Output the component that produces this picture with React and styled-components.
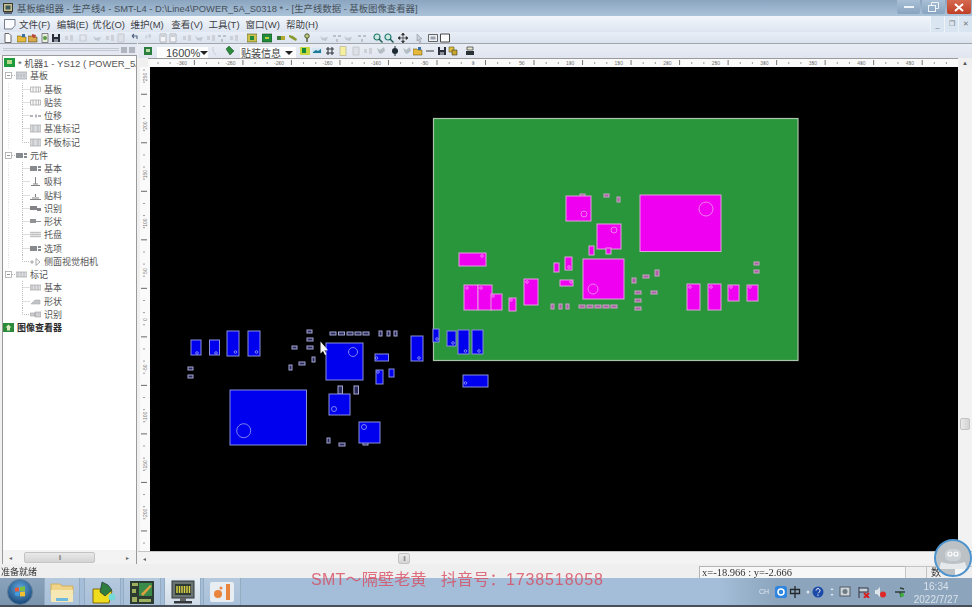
import React from "react";
import styled, { createGlobalStyle } from "styled-components";

const Global = createGlobalStyle`
  html, body { margin: 0; padding: 0; background: #f0f0f0; overflow: hidden; }
  * { box-sizing: border-box; }
`;

const LATIN_FONT = `"Liberation Sans", "Noto Sans CJK SC", sans-serif`;

const Screen = styled.div`
  position: relative;
  width: 972px;
  height: 607px;
  display: flex;
  flex-direction: column;
  overflow: hidden;
  font-family: ${LATIN_FONT};
  color: #333;
  filter: blur(0.4px);
`;

/* ---------- title + menu ---------- */
const TitleBar = styled.div`
  height: 16px;
  flex: none;
  display: flex;
  align-items: center;
  padding-left: 3px;
  background: linear-gradient(#8ba5c0, #abc3d9);
`;
const AppIcon = styled.svg`
  width: 10px;
  height: 11px;
  flex: none;
`;
const TitleText = styled.span`
  margin-left: 4px;
  font-size: 9.4px;
  color: #46505a;
  white-space: nowrap;
`;
const WinButtons = styled.div`
  margin-left: auto;
  display: flex;
  gap: 2px;
  padding-right: 1px;
  align-self: flex-start;
`;
const WinButton = styled.div`
  width: ${(p) => (p.$close ? 24 : 23)}px;
  height: 14px;
  display: flex;
  align-items: center;
  justify-content: center;
  border-radius: 0 0 2px 2px;
  background: ${(p) => (p.$close ? "linear-gradient(#d46a50, #bf3f25)" : "linear-gradient(#a9c0d6, #88a4bf)")};
`;
const MenuBar = styled.div`
  height: 16px;
  flex: none;
  display: flex;
  align-items: center;
  padding-left: 4px;
  background: linear-gradient(#f2f6fb, #dde5f0);
`;
const MenuItem = styled.span`
  font-size: 9.5px;
  color: #3c4046;
  margin-left: ${(p) => p.$gap}px;
  white-space: nowrap;
`;
const MdiButtons = styled.div`
  margin-left: auto;
  display: flex;
  height: 100%;
`;
const MdiButton = styled.div`
  width: 14px;
  display: flex;
  align-items: center;
  justify-content: center;
  font-size: 7px;
  color: #777;
  background: #d9e5f0;
  border-left: 1px solid #eef3f8;
`;

/* ---------- toolbars ---------- */
const TopTools = styled.div`
  height: 11px;
  flex: none;
  display: flex;
  align-items: center;
  background: linear-gradient(#e9eef6, #dbe3ee);
`;
const ToolSvg = styled.svg`
  width: 10px;
  height: 10px;
  flex: none;
  margin-left: ${(p) => p.$gap}px;
`;
const Main = styled.div`
  flex: 1;
  min-height: 0;
  display: flex;
`;
const LeftPane = styled.div`
  width: 138px;
  flex: none;
  display: flex;
  flex-direction: column;
  background: #f0f0f0;
  padding-right: 1px;
`;
const PaneHeader = styled.div`
  height: 12px;
  flex: none;
  display: flex;
  align-items: center;
  gap: 2px;
  padding: 0 2px 0 3px;
  background: #e3e8f2;
  border-top: 1px solid #a2a5aa;
`;
const Grip = styled.div`
  flex: 1;
  height: 3px;
  border-top: 1px solid #c3c8d0;
  border-bottom: 1px solid #c3c8d0;
`;
const PaneBtn = styled.div`
  width: 6px;
  height: 6px;
  background: #9a9ea5;
  opacity: 0.7;
`;
const TreeBox = styled.div`
  flex: 1;
  min-height: 0;
  margin-left: 2px;
  display: flex;
  flex-direction: column;
  background: #fff;
  border: 1px solid #9a9a9a;
  border-bottom: none;
`;
const TreeList = styled.div`
  flex: 1;
  min-height: 0;
  overflow: hidden;
`;
const TreeRow = styled.div`
  height: 13.25px;
  display: flex;
  align-items: center;
  padding-left: ${(p) => p.$pad || 0}px;
  font-size: ${(p) => p.$size || 9}px;
  font-weight: ${(p) => (p.$bold ? 700 : 400)};
  color: ${(p) => (p.$bold ? "#2a2a2a" : "#555")};
  white-space: nowrap;
  overflow: hidden;
`;
const RowLead = styled.svg`
  flex: none;
  height: 13.25px;
  width: ${(p) => p.$w}px;
`;
const RowIcon = styled.svg`
  flex: none;
  width: 11px;
  height: 9px;
  margin-right: 3px;
  opacity: ${(p) => (p.$soft ? 0.8 : 1)};
`;
const HScrollTrack = styled.div`
  height: 14px;
  flex: none;
  display: flex;
  align-items: center;
  background: #f3f3f3;
  color: #666;
  font-size: 6px;
`;
const ScrollArrow = styled.span`
  width: ${(p) => p.$w || 12}px;
  flex: none;
  text-align: center;
`;
const ScrollThumb = styled.div`
  display: flex;
  align-items: center;
  justify-content: center;
  flex: none;
  width: ${(p) => p.$w}px;
  height: 11px;
  margin-left: ${(p) => p.$offset || 0}px;
  background: linear-gradient(#e9e9e9, #d4d4d4);
  border: 1px solid #c3c3c3;
  border-radius: 2px;
  color: #777;
  font-size: 6px;
  letter-spacing: -1px;
`;

const RightPane = styled.div`
  flex: 1;
  min-width: 0;
  display: flex;
  flex-direction: column;
  background: #f0f0f0;
`;
const DocTools = styled.div`
  height: 15px;
  flex: none;
  display: flex;
  align-items: center;
  background: linear-gradient(#e9edf5, #e0e5f0);
  border-top: 1px solid #a2a5aa;
`;
const Combo = styled.div`
  width: ${(p) => p.$w}px;
  margin-left: ${(p) => p.$gap}px;
  height: 12px;
  margin-top: 3px;
  flex: none;
  display: flex;
  align-items: center;
  justify-content: space-between;
  padding: 0 3px 0 ${(p) => p.$pad}px;
  background: #fdfdfd;
  font-size: ${(p) => p.$size}px;
  color: #444;
  white-space: nowrap;
  overflow: hidden;
`;
const ComboCaret = styled.span`
  width: 0;
  height: 0;
  flex: none;
  border-left: 4px solid transparent;
  border-right: 4px solid transparent;
  border-top: 4px solid #222;
`;
const RulerRow = styled.div`
  height: 9px;
  flex: none;
  display: flex;
  align-items: center;
  padding-left: 10px;
  background: #f0f0f0;
`;
const RulerSvg = styled.svg`
  display: block;
  flex: none;
`;
const UpArrow = styled.span`
  flex: 1;
  text-align: center;
  font-size: 6px;
  color: #555;
`;
const ViewRow = styled.div`
  height: 484px;
  flex: none;
  display: flex;
`;
const VRulerBox = styled.div`
  width: 12px;
  flex: none;
  padding-left: 2px;
  background: #f0f0f0;
`;
const Canvas = styled.div`
  width: 808px;
  flex: none;
  background: #000;
  overflow: hidden;
`;
const BoardSvg = styled.svg`
  display: block;
`;
const VScroll = styled.div`
  flex: 1;
  display: flex;
  flex-direction: column;
  align-items: center;
  padding-top: 351px;
  background: #f2f2f2;
`;
const VThumb = styled.div`
  width: 10px;
  height: 12px;
  background: linear-gradient(90deg, #e9e9e9, #d4d4d4);
  border: 1px solid #c3c3c3;
  border-radius: 2px;
`;
const BottomScroll = styled.div`
  flex: 1;
  display: flex;
  align-items: center;
  background: #f3f3f3;
  color: #666;
  font-size: 6px;
  border-top: 1px solid #c4c4c4;
`;

/* ---------- status + taskbar ---------- */
const StatusBar = styled.div`
  height: 14px;
  flex: none;
  display: flex;
  align-items: center;
  padding-left: 1px;
  background: #efefef;
  font-size: 9px;
  color: #333;
`;
const StatusText = styled.span`
  width: 698px;
  flex: none;
`;
const CoordBox = styled.div`
  width: 206px;
  height: 12px;
  margin-top: 2px;
  flex: none;
  padding-left: 2px;
  font-family: "Liberation Serif", serif;
  font-size: 10.5px;
  line-height: 12px;
  color: #333;
  background: #f7f7f7;
  border-top: 1px solid #b4b4b4;
  border-left: 1px solid #b4b4b4;
  white-space: nowrap;
`;
const StatusCell = styled.div`
  width: ${(p) => p.$w}px;
  height: 12px;
  margin-top: 2px;
  flex: none;
  padding-left: ${(p) => p.$pad || 0}px;
  border-top: 1px solid #c4c4c4;
  border-left: 1px solid #c4c4c4;
  font-size: 10px;
  line-height: 11px;
`;
const Taskbar = styled.div`
  height: 29px;
  flex: none;
  display: flex;
  align-items: stretch;
  background: linear-gradient(90deg, #a4bdd8 0, #a4bdd8 74%, #8ca5bd 80%, #8ca5bd 100%);
  border-bottom: 2px solid #47505a;
`;
const StartArea = styled.div`
  width: 44px;
  flex: none;
  display: flex;
  align-items: center;
  justify-content: center;
  background: linear-gradient(#8aa3bb, #7a94ad);
`;
const StartOrb = styled.svg`
  width: 26px;
  height: 26px;
  margin-right: 4px;
`;
const TaskButton = styled.div`
  width: ${(p) => p.$w}px;
  margin-right: ${(p) => p.$gap}px;
  flex: none;
  display: flex;
  align-items: center;
  justify-content: center;
  background: ${(p) => (p.$active ? "linear-gradient(#e6eef5, #cfdbe7)" : "linear-gradient(#b5c9de, #a8c0d9)")};
  border-left: 1px solid #94abc2;
  border-right: 1px solid #94abc2;
`;
const TaskIcon = styled.svg`
  width: 26px;
  height: 26px;
`;
const Tray = styled.div`
  margin-left: auto;
  display: flex;
  align-items: center;
  padding-right: 9px;
`;
const TrayLabel = styled.span`
  font-size: 7px;
  color: #dfe7ef;
  margin-right: 6px;
`;
const TrayIcon = styled.svg`
  width: ${(p) => p.$w || 12}px;
  height: 12px;
  margin-right: ${(p) => p.$gap}px;
  flex: none;
`;
const Clock = styled.div`
  width: 54px;
  padding-top: 3px;
  text-align: center;
  font-size: 10px;
  line-height: 13px;
  color: #d9e2ea;
  white-space: nowrap;
`;

/* ---------- overlays ---------- */
const Watermark = styled.div`
  position: absolute;
  left: 311px;
  top: 570px;
  font-family: ${LATIN_FONT};
  font-size: 16px;
  line-height: 20px;
  letter-spacing: 0.25px;
  color: rgba(216, 72, 92, 0.78);
  white-space: pre;
`;
const WatermarkDigits = styled.span`
  letter-spacing: 0.9px;
`;
const Avatar = styled.div`
  position: absolute;
  left: 934px;
  top: 539px;
  width: 38px;
  height: 38px;
  border-radius: 50%;
  border: 2px solid #4d94cf;
  background: #bcc1c5;
  overflow: hidden;
`;
const AvatarFace = styled.svg`
  display: block;
  width: 34px;
  height: 34px;
`;

/* ---------- drawings ---------- */
const toolParts = {
  page: <path d="M2 .5h4l2 2v7H2z" fill="#fff" stroke="#444" strokeWidth=".8" />,
  folder: (
    <>
      <path d="M0 3h4l1 1h4v5H0z" fill="#e6b93a" stroke="#6a5a20" strokeWidth=".6" />
      <path d="M5 1h3v3H5z" fill="#3a6ea8" />
    </>
  ),
  folder2: (
    <>
      <path d="M0 3h4l1 1h4v5H0z" fill="#d8a84a" stroke="#5a4a20" strokeWidth=".6" />
      <path d="M4 1l4 1-1 3-3-1z" fill="#b84a3a" />
    </>
  ),
  doc: (
    <>
      <path d="M2 .5h6v9H2z" fill="#e8f0d8" stroke="#556" strokeWidth=".7" />
      <circle cx="5" cy="5" r="2" fill="#5a9a4a" />
    </>
  ),
  floppy: (
    <>
      <path d="M1 1h8v8H1z" fill="#2a2e3a" />
      <path d="M3 1h4v3H3z" fill="#dfe3ea" />
      <path d="M3 6h4v3H3z" fill="#8a8e98" />
    </>
  ),
  dim: <path d="M2 2h6v6H2z" fill="none" stroke="#c8ccd3" strokeWidth="1.2" />,
  dimdots: <path d="M1 3h3v4H1zM6 2h3v6H6z" fill="#cdd0d7" />,
  undo: <path d="M2 3h5v3M2 3l2-2M2 3l2 2" fill="none" stroke="#51627e" strokeWidth="1.1" />,
  redo: <path d="M8 3H3v3M8 3L6 1M8 3L6 5" fill="none" stroke="#c8ccd3" strokeWidth="1.1" />,
  box: (
    <>
      <path d="M2 1h6v8H2z" fill="#f3f5f8" stroke="#a4a8b0" strokeWidth=".8" />
      <path d="M3 3h4" stroke="#a4a8b0" />
    </>
  ),
  greenA: (
    <>
      <path d="M0 1h10v8H0z" fill="#cfc050" stroke="#4a5a20" strokeWidth=".6" />
      <path d="M3 3h4v4H3z" fill="#1f8a3a" />
    </>
  ),
  greenB: (
    <>
      <path d="M0 1h10v8H0z" fill="#1f8a3a" stroke="#1a4a20" strokeWidth=".6" />
      <path d="M3 4h4v2H3z" fill="#b8d040" />
    </>
  ),
  chipA: (
    <>
      <path d="M1 3h8v4H1z" fill="#b0a830" />
      <path d="M1 3h4v4H1z" fill="#3a7a3a" />
    </>
  ),
  chipB: <path d="M1 2l4 1 4 3-1 2-4-2-3-2z" fill="#8a9a30" />,
  key: (
    <>
      <circle cx="5" cy="3" r="2.2" fill="#c4cc80" stroke="#4a5a30" />
      <path d="M5 5v4" stroke="#4a5a30" strokeWidth="1.4" />
    </>
  ),
  dimlink: <path d="M1 3l3 2 5-1-2 4-4-1z" fill="#c2c7ce" />,
  dimpair: <path d="M1 2h3v2H1zM6 2h3v2H6zM4 6h2v3H4z" fill="#bcc1c8" />,
  zoomIn: (
    <>
      <circle cx="4" cy="4" r="3" fill="#cfe8e0" stroke="#1f7a70" strokeWidth="1.2" />
      <path d="M6 6l3.5 3.5" stroke="#1f5a50" strokeWidth="1.4" />
    </>
  ),
  move: <path d="M5 0v10M0 5h10M5 0L3.5 2h3zM5 10L3.5 8h3zM0 5l2-1.5v3zM10 5L8 3.5v3z" fill="#333" stroke="#333" strokeWidth=".7" />,
  cursor: <path d="M3 1l5 5H5.5L7 9 5.5 9.5 4 6.5 3 8z" fill="#c8d0e0" stroke="#888" strokeWidth=".5" />,
  frame: (
    <>
      <path d="M.5 1.5h9v7h-9z" fill="#eef0f4" stroke="#444" strokeWidth=".8" />
      <path d="M2.5 3.5h5v3h-5z" fill="#98a0ae" />
    </>
  ),
  rect: <path d="M.5 1h9v8h-9z" fill="#fbfbfb" stroke="#333" strokeWidth=".9" />,
  solidGreen: (
    <>
      <path d="M1 1h8v8H1z" fill="#2b7d3f" />
      <path d="M3 3h4v3H3z" fill="#bde0a8" />
    </>
  ),
  tag: <path d="M1 3l3-3 5 5-4 4z" fill="#2c8a3c" stroke="#1c4a22" strokeWidth=".5" />,
  greenC: (
    <>
      <path d="M0 1h10v8H0z" fill="#c8d840" />
      <path d="M2 2h4v5H2z" fill="#158a3a" />
    </>
  ),
  wave: (
    <>
      <path d="M0 2h10v6H0z" fill="#d4e6f0" />
      <path d="M1 6l3-2 2 1 3-2v4H1z" fill="#1f7a9a" />
    </>
  ),
  hash: <path d="M3 1v8M7 1v8M1 3h8M1 7h8" stroke="#34383e" strokeWidth="1.1" />,
  note: <path d="M2 .5h6v9H2z" fill="#f6ef9e" stroke="#bcb8a0" strokeWidth=".8" />,
  dimpage: <path d="M2 1h6v8H2z" fill="#dde0e6" stroke="#c4c8d0" />,
  pin: (
    <>
      <circle cx="5" cy="5" r="3" fill="#1d2a30" />
      <path d="M5 0v2M5 8v2" stroke="#1d2a30" />
    </>
  ),
  dimsplit: <path d="M1 2l3 2 4-3 1 4-4 3-2-1z" fill="#b4bdc2" />,
  dash: <path d="M1 5h8" stroke="#55595f" strokeWidth="1.2" />,
  yellowDoc: (
    <>
      <path d="M1 1h5v5H1z" fill="#e0c040" stroke="#5a5020" strokeWidth=".6" />
      <path d="M4 4h5v5H4z" fill="#c8a430" stroke="#3a3a20" strokeWidth=".6" />
    </>
  ),
  stamp: (
    <>
      <path d="M2 1h6v3H2z" fill="#e8e8d0" stroke="#333" strokeWidth=".7" />
      <path d="M1 5h8v4H1z" fill="#2a3236" />
    </>
  ),
  small: <path d="M3 1v4l3 4" fill="none" stroke="#c8ccd3" />,
};

const topTools = [
  [8, "page"], [22, "folder"], [33, "folder2"], [45, "doc"], [56, "floppy"], [69, "dimdots"], [83, "dim"],
  [97, "dimlink"], [110, "dimdots"], [121, "dimpage"], [135, "undo"], [148, "redo"], [163, "box"], [173, "box"],
  [187, "dimdots"], [199, "dimlink"], [211, "dimdots"], [222, "dimpair"], [234, "dimdots"], [252, "greenA"],
  [267, "greenB"], [281, "chipA"], [293, "chipB"], [307, "key"], [324, "dimlink"], [337, "dimpair"], [348, "dimlink"],
  [362, "dimpair"], [378, "zoomIn"], [389, "zoomIn"], [403, "move"], [419, "cursor"], [433, "frame"], [445, "rect"],
];

const runFrom = (origin, items) => {
  let end = origin;
  return items.map(([x, kind]) => {
    const gap = x - 5 - end;
    end = x + 5;
    return (
      <ToolSvg key={`${x}${kind}`} viewBox="0 0 10 10" $gap={gap}>
        {toolParts[kind]}
      </ToolSvg>
    );
  });
};

const treeIconParts = {
  board: <path d="M0 1h11v7H0z M2 3v3M5 3v3M8 3v3" fill="#c4c8ce" stroke="#95999f" strokeWidth=".8" />,
  frame: <path d="M.5 2h10v5H.5zM3 2v5M6 2v5M8.5 2v5" fill="#f4f4f4" stroke="#999" strokeWidth=".8" />,
  dots: <path d="M0 4h3v2H0zM5 3.5h2v3H5zM8 4h3v2H8z" fill="#a0a3a9" />,
  chip: <path d="M0 1h11v7H0z M3 1v7M8 1v7" fill="#cfd1d4" stroke="#9a9ca0" strokeWidth=".8" />,
  dark: <path d="M0 2h7v5H0zM8 2h3v2H8zM8 5h3v2H8z" fill="#6a6d72" />,
  pick: <path d="M5.5 0v7M3 7h5M1 8.5h9" fill="none" stroke="#666" />,
  place: <path d="M5.5 3v3M2 7h7M0 8.5h11" stroke="#666" strokeWidth="1.1" fill="none" />,
  vision: <path d="M0 2h7v4H0zM7 4h4v3H7z" fill="#63666b" />,
  shape: <path d="M0 2h6v4H0zM6 4h5v1H6z" fill="#76797e" />,
  tray: <path d="M0 2h11v1H0zM0 4h11v1H0zM0 6h11v1H0zM3 2v5M7 2v5" fill="#b4b4b4" stroke="#b4b4b4" strokeWidth=".5" />,
  cam: <path d="M0 5h4M2 3v4M6 1.5l4 3.5-4 3.5z" fill="none" stroke="#888" strokeWidth=".9" />,
  mark: <path d="M0 2h11v5H0zM2 2v5M5 2v5M8 2v5" fill="#d6d8dc" stroke="#999" strokeWidth=".8" />,
  slant: <path d="M1 7l4-4h5v4z" fill="#b4b6ba" stroke="#999" strokeWidth=".6" />,
  frameS: <path d="M0 3h5v3H0zM5 2h6v5H5z" fill="#c0c2c6" stroke="#888" strokeWidth=".6" />,
};

const treeRows = [
  { label: "基板", icon: "board", level: 0 },
  { label: "基板", icon: "frame", level: 1 },
  { label: "贴装", icon: "frame", level: 1 },
  { label: "位移", icon: "dots", level: 1 },
  { label: "基准标记", icon: "chip", level: 1 },
  { label: "坏板标记", icon: "chip", level: 1, last: true },
  { label: "元件", icon: "dark", level: 0 },
  { label: "基本", icon: "dark", level: 1 },
  { label: "吸料", icon: "pick", level: 1 },
  { label: "贴料", icon: "place", level: 1 },
  { label: "识别", icon: "vision", level: 1 },
  { label: "形状", icon: "shape", level: 1 },
  { label: "托盘", icon: "tray", level: 1 },
  { label: "选项", icon: "dark", level: 1 },
  { label: "侧面视觉相机", icon: "cam", level: 1, last: true },
  { label: "标记", icon: "mark", level: 0 },
  { label: "基本", icon: "mark", level: 1 },
  { label: "形状", icon: "slant", level: 1 },
  { label: "识别", icon: "frameS", level: 1, last: true },
];

const dotted = { stroke: "#bcbcbc", strokeWidth: 1, strokeDasharray: "1 1", fill: "none" };

function TreeLead({ level, last, noTrunk }) {
  if (level === 0) {
    return (
      <RowLead viewBox="0 0 13 13.25" $w={13}>
        <path d="M9 6.5h4" {...dotted} />
        <rect x="2.5" y="3.5" width="6" height="6" fill="#fff" stroke="#a8a8a8" strokeWidth=".8" />
        <path d="M4 6.5h3" stroke="#777" strokeWidth=".8" />
      </RowLead>
    );
  }
  return (
    <RowLead viewBox="0 0 27 13.25" $w={27}>
      {!noTrunk && <path d="M5.5 0v13.25" {...dotted} opacity=".4" />}
      <path d={last ? "M19.5 0v6.5h7" : "M19.5 0v13.25M19.5 6.5h7"} {...dotted} />
    </RowLead>
  );
}

const parts = {
  blue: [
    [191, 340, 10, 15, 197, 353], [209.5, 340, 10, 15, 216, 353], [227, 331, 12, 25, 235.5, 352], [248, 331, 12, 25, 256.5, 352],
    [230, 390, 76.5, 55, 243.7, 430.7, 7], [326, 343, 37, 37, 353, 352, 4.5], [329, 394, 21, 21, 334, 409, 2.5],
    [359, 422, 21, 21, 364, 427, 2.5], [375, 354, 13.5, 7, 376.5, 358], [376, 370, 7, 14, 378, 372], [389, 369, 5, 8],
    [411, 336, 12, 25, 419, 358], [433, 329, 6, 13, 437, 339], [447, 331, 9, 15, 453, 343], [458, 330, 11, 24, 465.5, 351],
    [472, 330, 11, 24, 479, 351], [463, 375, 25, 12, 465.5, 383],
  ],
  bluePads: [
    [307, 330, 5, 3], [307, 338, 6, 3], [307, 346, 6, 3], [292, 346, 5, 3], [299, 362, 6, 3], [312, 357, 3, 5], [289, 365, 3, 5],
    [188, 367, 5, 3], [188, 375, 5, 3], [330, 332, 6, 3], [338.5, 332, 6, 3], [347, 332, 6, 3], [355, 332, 6, 3], [363, 332, 6, 3],
    [379, 331, 3, 5], [387, 331, 3, 5], [394, 331, 3, 5], [338, 386, 4.5, 8], [354, 386, 4.5, 8], [327, 438, 3, 5], [339, 443, 6, 3], [363, 442, 5, 3],
  ],
  magenta: [
    [566, 196, 25, 25, 584, 214, 3], [640, 195, 81, 56.5, 706, 209, 7], [597, 224, 24, 25, 614, 230, 3], [589, 246, 5, 9], [606, 248, 5, 6],
    [583, 259, 41, 40, 593, 289, 5], [565, 257, 7, 13, 569, 267], [554, 263, 5, 9], [560, 280, 13, 6, 571, 282], [459, 253, 27, 13, 482, 256],
    [464, 285, 14, 25, 467, 288], [478, 285, 14, 25, 481, 288], [491, 294, 11, 16, 493, 296], [509, 298, 7, 13, 511, 300], [524, 279, 14, 26, 527, 282],
    [687, 284, 13, 26, 690, 287], [708, 284, 13, 26, 711, 287], [728, 285, 11, 16, 731, 287], [747, 285, 11, 16, 750, 287],
  ],
  magentaPads: [
    [580, 194, 5, 3], [604, 194, 5, 3], [617, 197, 3, 5], [551, 304, 3, 5], [559, 304, 3, 5], [566, 304, 3, 5], [579, 305, 6, 3], [587, 305, 6, 3],
    [595, 305, 6, 3], [603, 305, 6, 3], [611, 305, 6, 3], [632, 278, 4, 5], [643, 275, 6, 3], [655, 270, 4, 6], [635, 291, 6, 3], [635, 299, 6, 3],
    [635, 307, 6, 3], [651, 291, 6, 3], [754, 262, 5, 3], [754, 270, 5, 3],
  ],
};

function Part({ p, fill, stroke, mark }) {
  const [x, y, w, h, cx, cy, r] = p;
  return (
    <>
      <rect x={x} y={y} width={w} height={h} fill={fill} stroke={stroke} strokeWidth="1" />
      {cx !== undefined && <circle cx={cx} cy={cy} r={r || 1.3} fill="none" stroke={mark} strokeWidth=".8" />}
    </>
  );
}

function HRuler() {
  const labels = [];
  for (let i = 0; i < 16; i++) labels.push(i);
  const ticks = [];
  for (let x = 10; x < 810; x += 12.13) ticks.push(x);
  return (
    <RulerSvg width="810" height="9" viewBox="148 0 810 9">
      <rect x="148" y="0" width="810" height="9" fill="#fafafa" />
      <path d="M148 .5h810" stroke="#9a9a9a" />
      {ticks.map((t, i) => (
        <path key={i} d={`M${148 + t} ${i % 4 === 3 ? 2 : 4}v${i % 4 === 3 ? 5 : 2}`} stroke={i % 4 === 3 ? "#555" : "#888"} strokeWidth=".8" />
      ))}
      {labels.map((i) => (
        <text key={i} x={182 + 48.53 * i} y="7" textAnchor="middle" fontSize="5" fill="#777" fontFamily="Liberation Sans, sans-serif">
          {(i - 6) * 50}
        </text>
      ))}
    </RulerSvg>
  );
}

function VRuler() {
  const ticks = [];
  for (let y = 0; y < 484; y += 12.13) ticks.push(y);
  const labels = [];
  for (let i = 0; i < 10; i++) labels.push(i);
  return (
    <RulerSvg width="10" height="484" viewBox="0 0 10 484">
      <rect width="10" height="484" fill="#fafafa" />
      {ticks.map((t, i) => (
        <path key={i} d={`M${i % 4 === 2 ? 1 : 3} ${t + 3}h${i % 4 === 2 ? 6 : 2}`} stroke={i % 4 === 2 ? "#444" : "#888"} strokeWidth=".8" />
      ))}
      {labels.map((i) => (
        <text
          key={i}
          transform={`translate(7 ${10 + 48.53 * i}) rotate(-90)`}
          textAnchor="middle"
          fontSize="5"
          fill="#777"
          fontFamily="Liberation Sans, sans-serif"
        >
          {(i - 5) * -50}
        </text>
      ))}
    </RulerSvg>
  );
}

function BoardView() {
  return (
    <BoardSvg width="808" height="484" viewBox="150 67 808 484">
      <rect x="433.5" y="118.5" width="364.5" height="242" fill="#2a963c" stroke="#aac4ac" strokeWidth="1.2" />
      {parts.bluePads.map((p, i) => (
        <Part key={i} p={p} fill="#2a2a5a" stroke="#a6a8d4" />
      ))}
      {parts.blue.map((p, i) => (
        <Part key={i} p={p} fill="#0000ee" stroke="#8a8fdc" mark="#9da2ef" />
      ))}
      {parts.magentaPads.map((p, i) => (
        <Part key={i} p={p} fill="#b060a8" stroke="#c8a4c4" />
      ))}
      {parts.magenta.map((p, i) => (
        <Part key={i} p={p} fill="#f000f0" stroke="#dfa0dc" mark="#f09cf0" />
      ))}
      <path d="M320.5 341.5v12l2.5-2.5 2 4 1.5-.8-2-4h3.5z" fill="#f4f4f4" />
    </BoardSvg>
  );
}

const menus = [
  ["文件(F)", 3], ["编辑(E)", 6.5], ["优化(O)", 4], ["维护(M)", 5.5], ["查看(V)", 7.5], ["工具(T)", 5.5], ["窗口(W)", 6], ["帮助(H)", 6],
];

export default function App() {
  return (
    <Screen>
      <Global />
      <TitleBar>
        <AppIcon viewBox="0 0 10 11">
          <rect x=".5" y=".5" width="9" height="8" fill="#c8c090" stroke="#3a3a30" />
          <rect x="2.5" y="2.5" width="5" height="4" fill="#3d5a5a" />
          <rect x="1" y="9" width="8" height="2" fill="#55606a" />
        </AppIcon>
        <TitleText>基板编组器 - 生产线4 - SMT-L4 - D:\Line4\POWER_5A_S0318 * - [生产线数据 - 基板图像查看器]</TitleText>
        <WinButtons>
          <WinButton>
            <svg width="10" height="4" viewBox="0 0 10 4">
              <rect y="1" width="10" height="2" fill="#eef3f8" />
            </svg>
          </WinButton>
          <WinButton>
            <svg width="11" height="10" viewBox="0 0 11 10">
              <path d="M3.5 3V.5h7v6H8" fill="none" stroke="#eef3f8" />
              <rect x=".5" y="3.5" width="7" height="6" fill="none" stroke="#eef3f8" />
            </svg>
          </WinButton>
          <WinButton $close>
            <svg width="10" height="9" viewBox="0 0 10 9">
              <path d="M1 1l8 7M9 1L1 8" stroke="#fff" strokeWidth="2" />
            </svg>
          </WinButton>
        </WinButtons>
      </TitleBar>
      <MenuBar>
        <svg width="12" height="12" viewBox="0 0 12 12">
          <path d="M.5 1.5h10.5v6l-3 3.5H.5z" fill="#fafcff" stroke="#66707e" strokeWidth=".9" />
        </svg>
        {menus.map(([m, g]) => (
          <MenuItem key={m} $gap={g}>{m}</MenuItem>
        ))}
        <MdiButtons>
          <MdiButton>_</MdiButton>
          <MdiButton>❐</MdiButton>
          <MdiButton>✕</MdiButton>
        </MdiButtons>
      </MenuBar>
      <TopTools>{runFrom(0, topTools)}</TopTools>
      <Main>
        <LeftPane>
          <PaneHeader>
            <Grip />
            <PaneBtn />
            <PaneBtn />
          </PaneHeader>
          <TreeBox>
            <TreeList>
              <TreeRow $pad={1} $size={9.5}>
                <RowIcon viewBox="0 0 11 9">
                  <rect width="11" height="9" fill="#1f9a3c" />
                  <rect x="3" y="2" width="5" height="4" fill="#b6d88a" />
                </RowIcon>
                * 机器1 - YS12 ( POWER_5A
              </TreeRow>
              {treeRows.map((r, i) => (
                <TreeRow key={i}>
                  <TreeLead level={r.level} last={r.last} noTrunk={i > 14} />
                  <RowIcon viewBox="0 0 11 9" $soft>{treeIconParts[r.icon]}</RowIcon>
                  {r.label}
                </TreeRow>
              ))}
              <TreeRow $bold>
                <RowIcon viewBox="0 0 11 9">
                  <rect width="11" height="9" fill="#2a8a3a" />
                  <path d="M5.5 1.5l3 3H7v3H4v-3H2.5z" fill="#d8ecc0" />
                </RowIcon>
                图像查看器
              </TreeRow>
            </TreeList>
            <HScrollTrack>
              <ScrollArrow $w={14}>◂</ScrollArrow>
              <ScrollThumb $w={71} $offset={7}>|||</ScrollThumb>
              <ScrollArrow $w={64}>▸</ScrollArrow>
            </HScrollTrack>
          </TreeBox>
        </LeftPane>
        <RightPane>
          <DocTools>
            {runFrom(0, [[10, "solidGreen"]])}
            <Combo $w={51} $gap={4} $pad={9} $size={11}>
              1600%
              <ComboCaret />
            </Combo>
            {runFrom(70, [[77, "small"], [92, "tag"]])}
            <Combo $w={56} $gap={5} $pad={1} $size={10}>
              贴装信息
              <ComboCaret />
            </Combo>
            {runFrom(158, [
              [167, "greenC"], [179, "wave"], [192, "hash"], [205, "note"], [218, "dimpage"], [230, "dimdots"], [243, "dimsplit"],
              [257, "pin"], [269, "dimsplit"], [280, "folder"], [292, "dash"], [304, "floppy"], [315, "yellowDoc"], [332, "stamp"],
            ])}
          </DocTools>
          <RulerRow>
            <HRuler />
            <UpArrow>▲</UpArrow>
          </RulerRow>
          <ViewRow>
            <VRulerBox>
              <VRuler />
            </VRulerBox>
            <Canvas>
              <BoardView />
            </Canvas>
            <VScroll>
              <VThumb />
            </VScroll>
          </ViewRow>
          <BottomScroll>
            <ScrollArrow $w={12}>◂</ScrollArrow>
            <ScrollThumb $w={12} $offset={248}>|||</ScrollThumb>
          </BottomScroll>
        </RightPane>
      </Main>
      <StatusBar>
        <StatusText>准备就绪</StatusText>
        <CoordBox>x=-18.966 : y=-2.666</CoordBox>
        <StatusCell $w={21} />
        <StatusCell $w={46} $pad={4}>数</StatusCell>
      </StatusBar>
      <Taskbar>
        <StartArea>
          <StartOrb viewBox="0 0 26 26">
            <defs>
              <radialGradient id="orb" cx=".5" cy=".35" r=".75">
                <stop offset="0" stopColor="#5fa8e0" />
                <stop offset="1" stopColor="#0f3766" />
              </radialGradient>
            </defs>
            <circle cx="13" cy="13" r="12.5" fill="url(#orb)" stroke="#5f7f9c" />
            <path d="M8 9l4-.8v4l-4 .4z" fill="#e85a38" />
            <path d="M13 8l5-.8v4.5l-5 .5z" fill="#7cc040" />
            <path d="M8 13.5l4-.4v4l-4-.6z" fill="#3f9ee0" />
            <path d="M13 13l5-.4v4.6l-5 .4z" fill="#f0c030" />
          </StartOrb>
        </StartArea>
        <TaskButton $w={36} $gap={4}>
          <TaskIcon viewBox="0 0 26 26">
            <path d="M2 5h9l2 2h11v8H2z" fill="#f0d488" stroke="#d0b060" />
            <path d="M2 11h22v12H2z" fill="#f6e8b4" />
            <path d="M7 19h12v3H7z" fill="#6ebadf" />
          </TaskIcon>
        </TaskButton>
        <TaskButton $w={37} $gap={2}>
          <TaskIcon viewBox="0 0 26 26">
            <path d="M3 10h8l2 2h9l-3 12H3z" fill="#f0dc1e" stroke="#7c6a10" />
            <path d="M12 3l6 3 4 5-7 6-5-4z" fill="#2f7d3f" stroke="#123" strokeWidth=".6" />
            <circle cx="22" cy="18" r="3.5" fill="#78d8d8" />
          </TaskIcon>
        </TaskButton>
        <TaskButton $w={38} $gap={3}>
          <TaskIcon viewBox="0 0 26 26">
            <rect x="1" y="2" width="24" height="23" fill="#2c3c30" />
            <path d="M3 4h6v3H3zM3 10h4v4H3zM10 20h12v3H10zM3 18h5v5H3z" fill="#9cb060" />
            <rect x="10" y="4" width="13" height="13" fill="#3a8a4a" />
            <path d="M12 15l9-9 2 1-9 10z" fill="#e0a040" />
          </TaskIcon>
        </TaskButton>
        <TaskButton $w={37} $gap={2} $active>
          <TaskIcon viewBox="0 0 26 26">
            <rect x="2" y="2" width="22" height="17" fill="#6a7272" stroke="#33393c" />
            <rect x="5" y="5" width="16" height="11" fill="#2e3a34" />
            <path d="M7 7v7M9.5 7v7M12 7v7M14.5 7v7M17 7v7M19.5 7v7" stroke="#d8d040" strokeWidth="1.5" />
            <path d="M10 19h6v3h-6z" fill="#666" />
            <path d="M4 22h18v2.5H4z" fill="#33393c" />
          </TaskIcon>
        </TaskButton>
        <TaskButton $w={38} $gap={0}>
          <TaskIcon viewBox="0 0 26 26">
            <rect x="1" y="3" width="24" height="20" rx="2" fill="#e8edf2" />
            <circle cx="9" cy="15" r="4" fill="#e8843c" />
            <circle cx="12" cy="9" r="1.5" fill="#e8843c" />
            <rect x="17" y="5" width="4" height="16" fill="#e8843c" />
          </TaskIcon>
        </TaskButton>
        <Tray>
          <TrayLabel>CH</TrayLabel>
          <TrayIcon viewBox="0 0 12 12" $gap={2}>
            <rect width="12" height="12" rx="2.5" fill="#2f86e0" />
            <circle cx="6" cy="6" r="3" fill="none" stroke="#fff" strokeWidth="1.5" />
          </TrayIcon>
          <TrayIcon viewBox="0 0 12 12" $gap={5}>
            <path d="M6 0v12M1.5 3.5h9v4h-9z" fill="none" stroke="#22282c" strokeWidth="1.3" />
          </TrayIcon>
          <TrayIcon viewBox="4 0 4 12" $w={4} $gap={2}>
            <circle cx="6" cy="6" r="1.5" fill="#dbe3ea" />
          </TrayIcon>
          <TrayIcon viewBox="0 0 12 12" $gap={5}>
            <circle cx="6" cy="6" r="5.5" fill="#1c4aa8" />
            <path d="M4 4.5a2 2 0 1 1 3 1.8L6 7.3M6 8.5v1.3" stroke="#fff" fill="none" />
          </TrayIcon>
          <TrayIcon viewBox="3 0 6 12" $w={6} $gap={4}>
            <path d="M6 2L4.5 4h3zM6 10L4.5 8h3z" fill="#e4ebf1" />
          </TrayIcon>
          <TrayIcon viewBox="0 0 12 12" $gap={7}>
            <rect x="1" y="1" width="10" height="9" fill="#cdd5da" stroke="#505a62" />
            <circle cx="6" cy="5.5" r="2.5" fill="#707a82" />
          </TrayIcon>
          <TrayIcon viewBox="0 0 12 12" $gap={4}>
            <path d="M1 1v11M1 2h9v4H1" fill="#c8d2da" stroke="#334" />
            <path d="M6 7l5 5M11 7l-5 5" stroke="#d82020" strokeWidth="2" />
          </TrayIcon>
          <TrayIcon viewBox="0 0 12 12" $gap={8}>
            <path d="M1 4h2l3-3v10L3 8H1z" fill="#dde4ea" />
            <circle cx="9" cy="8.5" r="3" fill="#e02828" />
          </TrayIcon>
          <TrayIcon viewBox="0 0 12 12" $gap={3}>
            <path d="M1 6h10M6 2l4 1M6 6l1 5" stroke="#2f4038" strokeWidth="1.4" />
            <circle cx="8" cy="9" r="2" fill="#38b038" />
          </TrayIcon>
          <Clock>
            16:34
            <br />
            2022/7/27
          </Clock>
        </Tray>
      </Taskbar>
      <Watermark>
        {"SMT～隔壁老黄   抖音号："}
        <WatermarkDigits>1738518058</WatermarkDigits>
      </Watermark>
      <Avatar>
        <AvatarFace viewBox="0 0 34 34">
          <rect x="9" y="8" width="16" height="12" rx="5" fill="#cdd2d6" />
          <circle cx="14" cy="13" r="2" fill="none" stroke="#fff" strokeWidth="1.2" />
          <circle cx="20" cy="13" r="2" fill="none" stroke="#fff" strokeWidth="1.2" />
          <path d="M5 21c7 2.5 17 2.5 24 0l2 7H3z" fill="#e6e9ec" />
          <rect x="19" y="28" width="10" height="6" fill="#f4f6f8" />
        </AvatarFace>
      </Avatar>
    </Screen>
  );
}
